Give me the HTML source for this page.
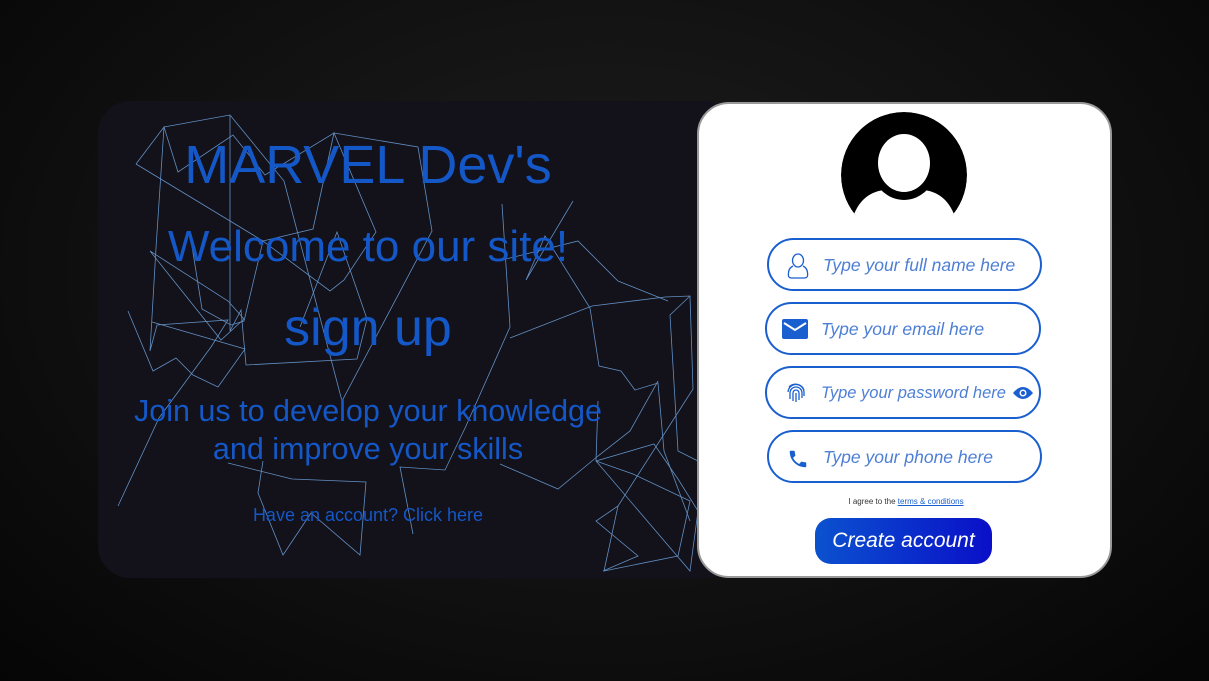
<!DOCTYPE html>
<html><head><meta charset="utf-8"><style>
*{margin:0;padding:0;box-sizing:border-box}
body{width:1209px;height:681px;overflow:hidden;position:relative;font-family:"Liberation Sans",sans-serif;
background:radial-gradient(ellipse at 50% 40%,#1e1e1e 0%,#121212 50%,#050505 100%)}
.left{position:absolute;left:98px;top:101px;width:640px;height:477px;background:#13111a;border-radius:32px;overflow:hidden}
.t{position:absolute;left:98px;width:540px;text-align:center;color:#1457c6;white-space:nowrap}
.right{position:absolute;left:697px;top:102px;width:415px;height:476px;background:#fff;border:2px solid #999;border-radius:32px}
.in{position:absolute;height:53px;border:2px solid #1a5fd0;border-radius:27px;background:#fff}
.in span{position:absolute;left:54px;top:15px;font-style:italic;font-size:17.5px;color:#4d7fd6}
.in svg{position:absolute}
.btn{position:absolute;left:815px;top:518px;width:177px;height:46px;border-radius:16px;background:linear-gradient(90deg,#0b52cf,#0a0fc8);color:#fff;font-style:italic;font-size:21px;text-align:center;line-height:46px}
</style></head><body>
<div class="left">
<svg width="640" height="477" style="position:absolute;left:0;top:0" stroke="#6fa6e0" stroke-width="0.8" fill="none" opacity="0.85">
<polyline points="66,26 132,14 186,80 244,300 334,130 320,46 236,32 167,74 135,34 80,71 66,26"/>
<polyline points="38,63 66,26 58,147 52,250 59,224 130,219 113,246 61,317 20,405"/>
<polyline points="38,63 165,140 215,128 236,32 278,131 246,179 232,190 165,140 146,220 133,224 104,208 93,139"/>
<polyline points="52,150 130,200 146,218 123,239 52,150"/>
<polyline points="132,14 132,230 143,209 148,264 259,258 269,218 239,131 202,226"/>
<polyline points="30,210 55,270 78,257 95,274 120,286 147,248 54,221"/>
<polyline points="130,362 194,378 268,381 262,454 213,412 185,454 160,392 165,360"/>
<polyline points="404,103 412,226 368,325 347,369 302,366 315,433"/>
<polyline points="475,100 428,179 447,135 492,207 501,265 523,270 537,289 560,282 566,350 592,420"/>
<polyline points="412,237 494,205 567,196 592,195 595,288 520,405 506,470 580,455 592,400 535,373 498,360 500,300"/>
<polyline points="498,360 556,343 580,378 600,410 592,470 498,360"/>
<polyline points="520,405 498,420 540,455 505,470"/>
<polyline points="592,195 572,214 580,350 600,360"/>
<polyline points="402,363 460,388 500,355 532,330 560,280"/>
<polyline points="400,160 480,140 520,180 570,200"/>
</svg>
</div>
<div class="t" style="top:134px;font-size:54px">MARVEL Dev's</div>
<div class="t" style="top:222px;font-size:44px">Welcome to our site!</div>
<div class="t" style="top:298px;font-size:52px">sign up</div>
<div class="t" style="top:392px;font-size:30.5px;line-height:38px">Join us to develop your knowledge<br>and improve your skills</div>
<div class="t" style="top:505px;font-size:18px">Have an account? Click here</div>

<div class="right"></div>
<svg width="140" height="120" style="position:absolute;left:834px;top:105px" viewBox="834 105 140 120">
<defs><clipPath id="c"><circle cx="904" cy="175" r="63"/></clipPath></defs>
<g clip-path="url(#c)">
<circle cx="904" cy="175" r="63" fill="#000"/>
<path d="M852 220 Q860 193 884 190 L924 190 Q948 193 956 220 Z" fill="#fff"/>
<ellipse cx="904" cy="164" rx="33" ry="36" fill="#000"/>
<ellipse cx="904" cy="163" rx="26" ry="29" fill="#fff"/>
</g>
<rect x="834" y="216" width="140" height="10" fill="#fff"/>
</svg>

<div class="in" style="left:767px;top:238px;width:275px">
<svg style="left:18px;top:13px" width="22" height="26" viewBox="0 0 22 26" fill="none" stroke="#1a5fd0" stroke-width="1.3"><ellipse cx="11" cy="7.5" rx="5.5" ry="6.5"/><path d="M6 13 C2 15 1 19 1.5 23 Q2 25 5 25 H17 Q20 25 20.5 23 C21 19 20 15 16 13"/></svg>
<span>Type your full name here</span></div>
<div class="in" style="left:765px;top:302px;width:276px">
<svg style="left:15px;top:15px" width="26" height="20" viewBox="0 0 26 20"><rect width="26" height="20" rx="2" fill="#1a5fd0"/><path d="M2 4 L13 11 L24 4" stroke="#fff" stroke-width="2" fill="none"/></svg>
<span>Type your email here</span></div>
<div class="in" style="left:765px;top:366px;width:276px">
<svg style="left:18px;top:14px" width="22" height="22" viewBox="0 0 22 22" fill="none" stroke="#1a5fd0" stroke-width="1.3"><path d="M4 5 A9 9 0 0 1 19 8"/><path d="M3 10 A8 8 0 0 1 19 11 V14"/><path d="M5 17 V11 A6 6 0 0 1 17 11 V16"/><path d="M8 19 V11 A3 3 0 0 1 14 11 V18"/><path d="M11 11 V20"/></svg>
<span style="font-size:16.5px;top:16px">Type your password here</span>
<svg style="left:246px;top:18px" width="20" height="14" viewBox="0 0 20 14"><path d="M0 7 Q10 -5 20 7 Q10 19 0 7Z" fill="#1a5fd0"/><circle cx="10" cy="7" r="3.5" fill="#fff"/><circle cx="10" cy="7" r="2" fill="#1a5fd0"/></svg></div>
<div class="in" style="left:767px;top:430px;width:275px">
<svg style="left:18px;top:16px" width="22" height="22" viewBox="0 0 24 24"><path fill="#1a5fd0" d="M6.6 10.8c1.4 2.8 3.8 5.1 6.6 6.6l2.2-2.2c.3-.3.7-.4 1-.2 1.1.4 2.3.6 3.6.6.6 0 1 .4 1 1V20c0 .6-.4 1-1 1C10.6 21 3 13.4 3 4c0-.6.4-1 1-1h3.5c.6 0 1 .4 1 1 0 1.3.2 2.5.6 3.6.1.3 0 .7-.2 1z"/></svg>
<span>Type your phone here</span></div>
<div style="position:absolute;left:700px;width:412px;top:497px;text-align:center;font-size:8px;color:#333">I agree to the <u style="color:#1a5fd0">terms &amp; conditions</u></div>
<div class="btn">Create account</div>
</body></html>
